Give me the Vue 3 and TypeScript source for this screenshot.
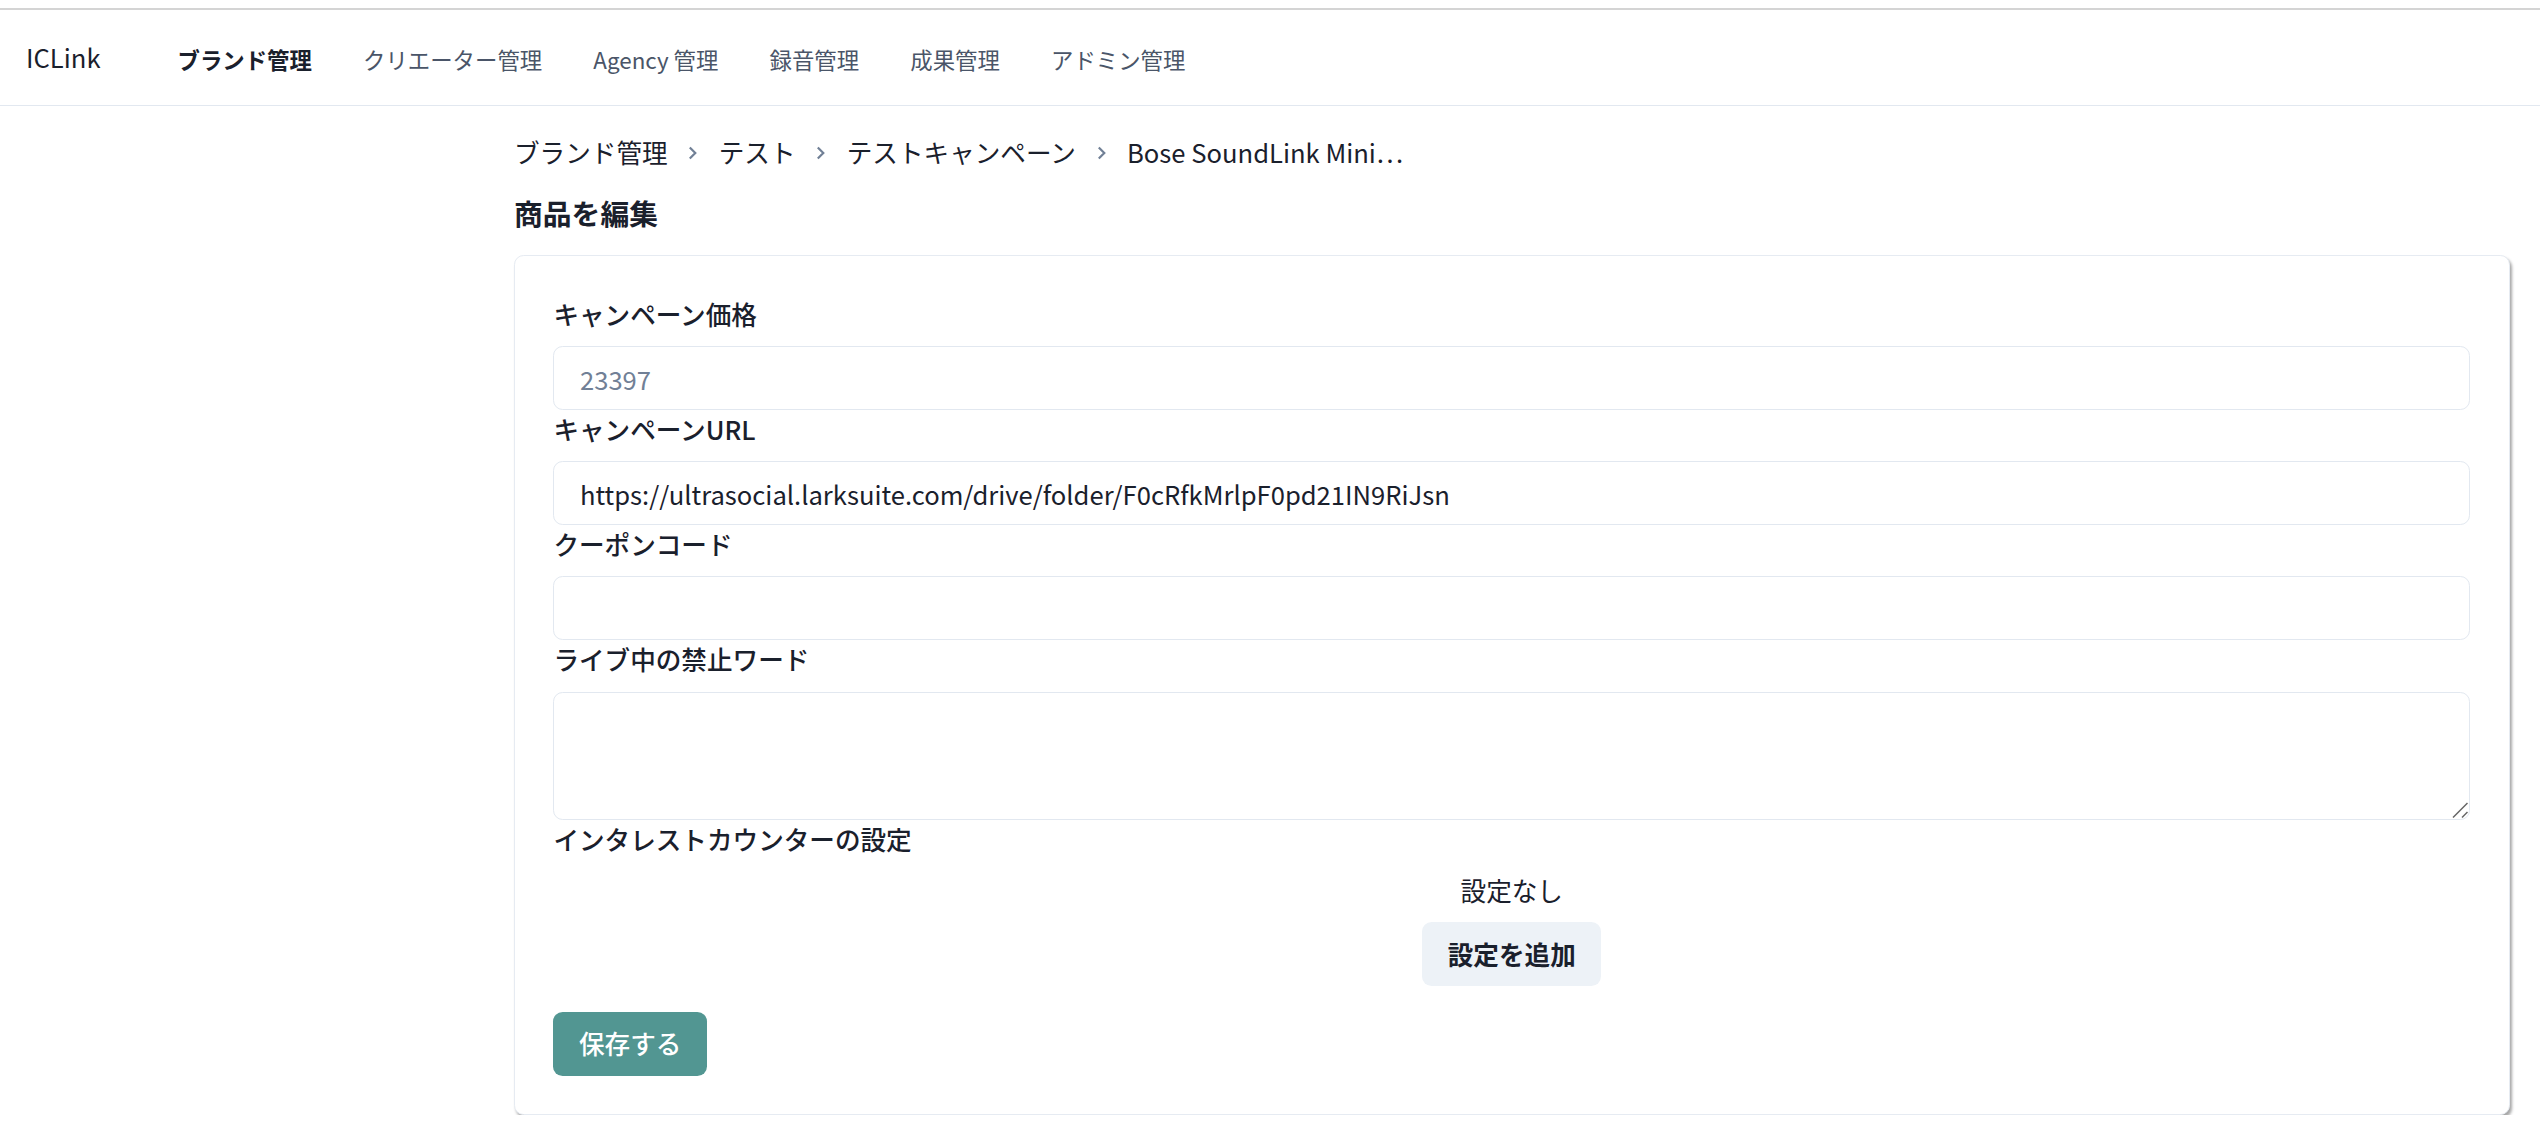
<template>
  <div class="page">
    <header class="topbar">
      <span class="logo">ICLink</span>
      <nav class="nav">
        <a v-for="item in navItems" :key="item" class="nav-item" :class="{ active: item === activeNav }">{{ item }}</a>
      </nav>
    </header>

    <main class="main">
      <ol class="breadcrumb">
        <li v-for="(crumb, i) in crumbs" :key="crumb" class="crumb">
          <svg v-if="i > 0" class="crumb-sep" viewBox="0 0 10 14" fill="none">
            <path d="M2 1.5 7.5 7 2 12.5" stroke="#718096" stroke-width="2.2" />
          </svg>
          <span>{{ crumb }}</span>
        </li>
      </ol>

      <h1 class="title">商品を編集</h1>

      <form class="card" @submit.prevent>
        <label class="label">キャンペーン価格</label>
        <input class="input" placeholder="23397" />

        <label class="label">キャンペーンURL</label>
        <input class="input" :value="campaignUrl" />

        <label class="label">クーポンコード</label>
        <input class="input" />

        <label class="label">ライブ中の禁止ワード</label>
        <div class="textarea-wrap">
          <textarea class="input textarea"></textarea>
          
          <svg class="resize-grip" viewBox="0 0 16 16" fill="none">
            <path d="M1 15.5 15.5 1M10 15.5 15.5 10" stroke="#666" stroke-width="1.5" />
          </svg>
        </div>

        <label class="label">インタレストカウンターの設定</label>
        <div class="counter">
          <p class="counter-empty">設定なし</p>
          <button type="button" class="btn btn-gray">設定を追加</button>
        </div>

        <button type="submit" class="btn btn-save">保存する</button>
      </form>
    </main>
  </div>
</template>

<script setup lang="ts">
const navItems = ['ブランド管理', 'クリエーター管理', 'Agency 管理', '録音管理', '成果管理', 'アドミン管理']
const activeNav = 'ブランド管理'
const crumbs = ['ブランド管理', 'テスト', 'テストキャンペーン', 'Bose SoundLink Mini⋯']
const campaignUrl = 'https://ultrasocial.larksuite.com/drive/folder/F0cRfkMrlpF0pd21IN9RiJsn'
</script>

<style>
html,
body {
  margin: 0;
  background: #fff;
}
</style>

<style scoped>
.page {
  font-family: 'Noto Sans CJK JP', 'Noto Sans', sans-serif;
  font-size: 25.6px;
  line-height: 38.4px;
  color: #1a202c;
  padding-top: 8px;
}
.topbar {
  display: flex;
  align-items: center;
  height: 98px;
  padding: 0 26px;
  border-top: 2px solid #d4d4d4;
  border-bottom: 1.6px solid #e2e8f0;
  box-sizing: border-box;
}
.logo {
  margin-right: 77px;
}
.nav {
  display: flex;
  gap: 51.2px;
  margin-top: 4px;
}
.nav-item {
  font-size: 22.4px;
  color: #4a5568;
}
.nav-item.active {
  font-weight: 700;
  color: #1a202c;
}
.main {
  padding: 0 30.5px 0 514px;
}
.breadcrumb {
  display: flex;
  align-items: center;
  list-style: none;
  margin: 0;
  padding: 26.5px 0 0;
}
.crumb {
  display: flex;
  align-items: center;
}
.crumb-sep {
  width: 25.6px;
  height: 14px;
  margin: 2px 12.8px 0;
}
.title {
  margin: 20.5px 0 0;
  font-size: 28.8px;
  line-height: 43px;
  font-weight: 700;
}
.card {
  display: flex;
  flex-direction: column;
  margin-top: 21px;
  padding: 38.4px;
  background: #fff;
  border: 1px solid #e6ebf2;
  border-radius: 9.6px;
  box-shadow: 2px 3px 3px rgba(0, 0, 0, 0.35);
}
.label {
  margin-bottom: 12.8px;
  font-weight: 500;
}
.input {
  display: block;
  width: 100%;
  height: 64px;
  padding: 0 25.6px;
  box-sizing: border-box;
  font: inherit;
  color: inherit;
  background: #fff;
  border: 1.6px solid #e2e8f0;
  border-radius: 9.6px;
  outline: none;
}
.input::placeholder {
  color: #718096;
}
.textarea-wrap {
  position: relative;
}
.textarea {
  height: 128px;
  padding-top: 12.8px;
  resize: none;
}
.resize-grip {
  position: absolute;
  right: 2px;
  bottom: 2px;
  width: 16px;
  height: 16px;
}
.counter {
  display: flex;
  flex-direction: column;
  align-items: center;
}
.counter-empty {
  margin: 0 0 12.8px;
}
.btn {
  height: 64px;
  padding: 0 25.6px;
  font: inherit;
  font-weight: 500;
  border: none;
  border-radius: 9.6px;
}
.btn-gray {
  font-weight: 600;
  color: #1a202c;
  background: #edf2f7;
}
.btn-save {
  align-self: flex-start;
  margin-top: 25.6px;
  color: #fff;
  background: #529692;
}
</style>
